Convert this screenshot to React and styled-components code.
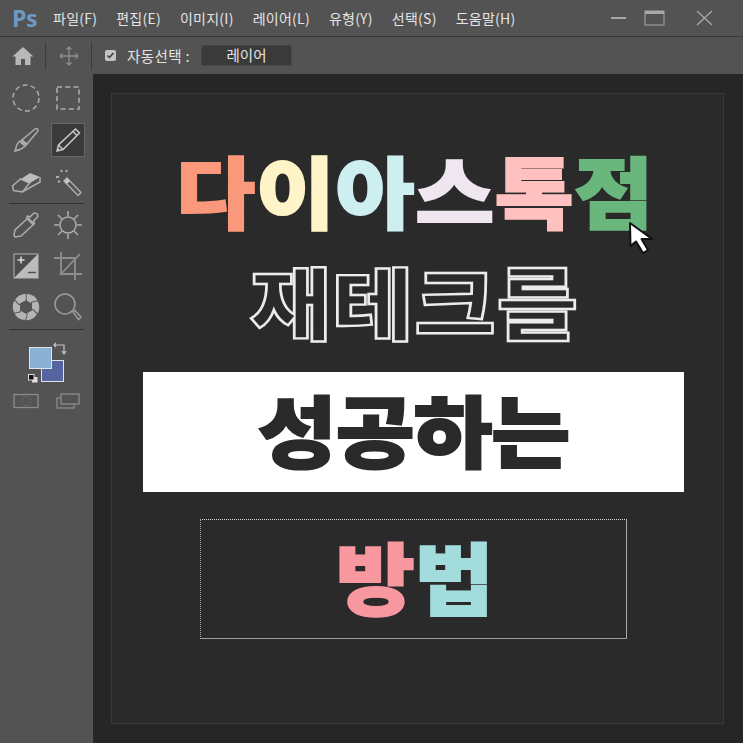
import React from 'react';
import styled, { createGlobalStyle, css } from 'styled-components';

const GlobalStyle = createGlobalStyle`
  html, body {
    margin: 0;
    padding: 0;
    background: #262626;
  }
`;

const KR = `"Noto Sans CJK KR", "Noto Sans", sans-serif`;

const Window = styled.div`
  width: 743px;
  height: 743px;
  display: flex;
  flex-direction: column;
  overflow: hidden;
  background: #535353;
  font-family: ${KR};
`;

const TitleBar = styled.header`
  height: 36px;
  display: flex;
  align-items: center;
  padding-left: 12px;
  border-bottom: 1px solid #373737;
  flex: none;
`;

const Logo = styled.div`
  width: 41px;
  font: bold 23px "Open Sans", sans-serif;
  letter-spacing: -0.5px;
  color: #6e9ac6;
`;

const Menu = styled.nav`
  display: flex;
  gap: 19px;
  flex: 1;
`;

const MenuItem = styled.span`
  font-size: 14px;
  line-height: 18px;
  color: #e4e4e4;
  letter-spacing: 0.25px;
`;

const WinControls = styled.div`
  display: flex;
  align-items: center;
  padding-right: 29px;
`;

const MinimizeIcon = styled.svg`
  margin-right: 17px;
`;

const CloseIcon = styled.svg`
  margin-left: 30px;
`;

const OptionsBar = styled.div`
  height: 37px;
  display: flex;
  align-items: center;
  flex: none;
`;

const OptionIcon = styled.div`
  width: 46px;
  height: 28px;
  display: flex;
  align-items: center;
  justify-content: center;
  border-right: 1px solid #3c3c3c;
  box-sizing: border-box;
`;

const CheckBox = styled.div`
  width: 11px;
  height: 11px;
  margin-left: 13px;
  background: #c4c4c4;
  border-radius: 2px;
  display: flex;
  align-items: center;
  justify-content: center;
`;

const OptionLabel = styled.span`
  margin-left: 11px;
  font-size: 14.5px;
  letter-spacing: 0.4px;
  color: #e4e4e4;
  width: 74px;
  white-space: nowrap;
`;

const LayerField = styled.div`
  width: 91px;
  height: 21px;
  box-sizing: border-box;
  background: #3a3a3a;
  border: 1px solid #474747;
  border-radius: 2px;
  color: #e4e4e4;
  font-size: 14.5px;
  line-height: 18px;
  text-align: center;
`;

const Body = styled.div`
  flex: 1;
  display: flex;
  min-height: 0;
`;

const Sidebar = styled.aside`
  width: 93px;
  flex: none;
  box-sizing: border-box;
  padding: 3px 5px 0;
  display: flex;
  flex-direction: column;
`;

const ToolGrid = styled.div`
  display: grid;
  grid-template-columns: 42px 42px;
  grid-auto-rows: ${p => p.$row}px;
`;

const Tool = styled.div`
  display: flex;
  align-items: center;
  justify-content: center;
`;

const ToolBox = styled.div`
  width: 34px;
  height: 34px;
  display: flex;
  align-items: center;
  justify-content: center;
  box-sizing: border-box;
  background: ${p => (p.$active ? '#3a3a3a' : 'transparent')};
  border: 1px solid ${p => (p.$active ? '#666' : 'transparent')};
`;

const Divider = styled.div`
  height: 1px;
  margin: ${p => p.$top || 0}px 4px 0;
  background: #333;
`;

const Swatches = styled.div`
  position: relative;
  height: 36px;
  margin-top: 16px;
`;

const Swatch = styled.div`
  position: absolute;
  left: ${p => p.$x}px;
  top: ${p => p.$y}px;
  width: 23px;
  height: 22px;
  box-sizing: border-box;
  border: 1px solid #dfe3ea;
  background: ${p => p.$color};
`;

const SwatchIcon = styled.svg`
  position: absolute;
  left: ${p => p.$x}px;
  top: ${p => p.$y}px;
`;

const BottomTools = styled.div`
  display: grid;
  grid-template-columns: 42px 42px;
  margin-top: 11px;
`;

const Workspace = styled.main`
  flex: 1;
  background: #262626;
  padding: 19px 19px 19px 18px;
  display: flex;
`;

const Document = styled.section`
  flex: 1;
  background: #2a2a2a;
  border: 1px solid #393939;
  box-sizing: border-box;
  padding-right: 9px;
  display: flex;
  flex-direction: column;
  align-items: center;
  position: relative;
`;

// the poster lettering is wider and heavier than the Black cut
const poster = css`
  font-size: 78px;
  font-weight: 900;
  white-space: nowrap;
  display: inline-block;
  transform: scaleX(1.1);
  -webkit-text-stroke: 2px currentColor;
`;

const Headline = styled.h1`
  margin: 50px 0 0 5px;
  height: 90px;
  line-height: 90px;
  letter-spacing: 0.6px;
  ${poster}
`;

const Letter = styled.span`
  color: ${p => p.$color};
`;

const Outlined = styled.h2`
  margin: 21px 0 0 3px;
  height: 90px;
  line-height: 90px;
  font-size: 78px;
  font-weight: 900;
  white-space: nowrap;
  letter-spacing: 1px;
  color: #2a2a2a;
  transform: scaleX(1.13);
  -webkit-text-stroke: 2.4px #ececec;
`;

const Banner = styled.div`
  margin-top: 27px;
  width: 541px;
  height: 120px;
  box-sizing: border-box;
  padding: 0 0 9px 2px;
  background: #fff;
  color: #2a2a2a;
  display: flex;
  align-items: center;
  justify-content: center;
`;

const BannerText = styled.span`
  letter-spacing: -1px;
  ${poster}
`;

const Marquee = styled.div`
  margin-top: 27px;
  width: 427px;
  height: 120px;
  box-sizing: border-box;
  padding: 0 0 8px 3px;
  border-style: dotted solid solid dotted;
  border-width: 1px;
  border-color: #e0e0e0 #a8a8a8 #9c9c9c #a8a8a8;
  display: flex;
  align-items: center;
  justify-content: center;
`;

const MarqueeText = styled.span`
  letter-spacing: 0;
  ${poster}
`;

const Cursor = styled.svg`
  position: absolute;
  left: 516px;
  top: 127px;
`;

const HEAD = [
  ['다', '#f9987a'],
  ['이', '#fff3c8'],
  ['아', '#cdeff0'],
  ['스', '#efe6ef'],
  ['톡', '#ffc0c0'],
  ['점', '#6ab77e'],
];

const MENUS = ['파일(F)', '편집(E)', '이미지(I)', '레이어(L)', '유형(Y)', '선택(S)', '도움말(H)'];

const stroke = { fill: 'none', stroke: '#adadad', strokeWidth: 1.5 };

const Icon = ({ children, size = 30 }) => (
  <svg width={size} height={size} viewBox="0 0 30 30">
    {children}
  </svg>
);

const TOOLS_TOP = [
  <Icon key="ellipse"><circle cx="15" cy="15" r="13" {...stroke} strokeDasharray="5 3.2" /></Icon>,
  <Icon key="rect"><rect x="4" y="4" width="22" height="22" {...stroke} strokeWidth="1.6" strokeDasharray="5 3.2" /></Icon>,
  <Icon key="brush">
    <path d="M24 4c2-1.500 4 .5 2.500 2.500L16 19l-5-4z" {...stroke} />
    <path d="M10.500 15.500l5 4c-2 3-5 5-11.500 6.500 1-2 1-4 2-6.500 1-2 2.500-3.500 4.500-4z" {...stroke} />
    <path d="M11 16l4 3-2 2-4-3z" fill="#adadad" />
  </Icon>,
  <Icon key="pencil">
    <path d="M22.500 4l4 4L10 24.500 4 26l1.500-6z" {...stroke} stroke="#c8c8c8" />
    <path d="M20 6.500l4 4M5.500 20l4.500 4.500" {...stroke} stroke="#c8c8c8" />
    <path d="M4 26l.8-3 2.200 2.200z" fill="#c8c8c8" />
  </Icon>,
  <Icon key="eraser">
    <path d="M1.500 19l8-7 9 4-7 9-9-1.500z" {...stroke} />
    <path d="M10 12l9-6 10 4-10 6z" fill="#bcbcbc" />
    <path d="M29 10v5l-18 10" {...stroke} />
  </Icon>,
  <Icon key="wand">
    <path d="M11 14l3-3 14 14.500-3 3z" {...stroke} />
    <path d="M11 14l3-3 3 3-3 3z" fill="#c4c4c4" />
    <path d="M8 3l1 2M14 3l-1 2M3 10h3M5 15l2-1" {...stroke} strokeWidth="2" />
  </Icon>,
];

const TOOLS_MID = [
  <Icon key="eyedropper">
    <path d="M17 8l6 6-13 12-6 1-1-2 1-5z" {...stroke} />
    <path d="M19 7l3-3c1-1.500 4-1 4.500.5.500 1.500 0 3-1 3.500l-3 3 1 2-2 1-6-6 1-2z" {...stroke} />
  </Icon>,
  <Icon key="dodge">
    <circle cx="15" cy="15" r="8" {...stroke} />
    <path d="M15 1v5M15 24v5M1 15h5M24 15h5M5 5l4 4M21 21l4 4M25 5l-4 4M9 21l-4 4" {...stroke} />
  </Icon>,
  <Icon key="levels">
    <path d="M3 3h24L3 27z" fill="#4d4d4d" />
    <path d="M27 3v24H3z" fill="#bcbcbc" />
    <rect x="3" y="3" width="24" height="24" fill="none" stroke="#b4b4b4" />
    <path d="M6.500 9h7M10 5.500v7" stroke="#d8d8d8" strokeWidth="1.500" />
    <path d="M17 21.500h8" stroke="#505050" strokeWidth="1.500" />
  </Icon>,
  <Icon key="crop">
    <path d="M8 1v22h21M1 7h21v22M7 24L27 3" {...stroke} stroke="#8e8e8e" strokeWidth="1.800" />
  </Icon>,
  <Icon key="aperture">
    {[0, 60, 120, 180, 240, 300].map(a => (
      <path
        key={a}
        d="M15.500 1.500A13.500 13.500 0 0 1 27 8.300L20.800 12L13.600 7.800z"
        fill="#b4b4b4"
        stroke="#535353"
        strokeWidth="0.900"
        transform={`rotate(${a} 15 15)`}
      />
    ))}
  </Icon>,
  <Icon key="zoom">
    <circle cx="12" cy="12" r="10" {...stroke} stroke="#9c9c9c" />
    <path d="M20 20l2-1.500 6 6.500-2.500 2.500z" {...stroke} stroke="#9c9c9c" />
  </Icon>,
];

export default function App() {
  return (
    <Window>
      <GlobalStyle />
      <TitleBar>
        <Logo>Ps</Logo>
        <Menu>
          {MENUS.map(m => (
            <MenuItem key={m}>{m}</MenuItem>
          ))}
        </Menu>
        <WinControls>
          <MinimizeIcon width="16" height="16"><rect y="7" width="15" height="2" fill="#a8a8a8" /></MinimizeIcon>
          <svg width="22" height="16"><rect x="1" y="1" width="19" height="14" fill="none" stroke="#a8a8a8" /><rect x="1" y="1" width="19" height="3" fill="#a8a8a8" /></svg>
          <CloseIcon width="18" height="16"><path d="M1 1l15 14M16 1L1 15" stroke="#a8a8a8" strokeWidth="1.300" /></CloseIcon>
        </WinControls>
      </TitleBar>
      <OptionsBar>
        <OptionIcon>
          <svg width="22" height="20" viewBox="0 0 22 20"><path d="M11 1L0.500 10.500H3.500V19H9V13H13V19H18.500V10.500H21.500z" fill="#b8b8b8" /></svg>
        </OptionIcon>
        <OptionIcon>
          <svg width="20" height="20" viewBox="0 0 20 20"><path d="M10 1v18M1 10h18M7.500 3.500L10 1l2.500 2.500M7.500 16.500L10 19l2.500-2.500M3.500 7.500L1 10l2.500 2.500M16.500 7.500L19 10l-2.500 2.500" fill="none" stroke="#8c8c8c" strokeWidth="1.300" /></svg>
        </OptionIcon>
        <CheckBox>
          <svg width="9" height="9" viewBox="0 0 9 9"><path d="M1.500 4.500l2 2 4-4.500" fill="none" stroke="#3a3a3a" strokeWidth="1.500" /></svg>
        </CheckBox>
        <OptionLabel>자동선택 :</OptionLabel>
        <LayerField>레이어</LayerField>
      </OptionsBar>
      <Body>
        <Sidebar>
          <ToolGrid $row={42}>
            {TOOLS_TOP.map((t, i) => (
              <Tool key={i}>
                <ToolBox $active={i === 3}>{t}</ToolBox>
              </Tool>
            ))}
          </ToolGrid>
          <Divider />
          <ToolGrid $row={41}>
            {TOOLS_MID.map((t, i) => (
              <Tool key={i}>{t}</Tool>
            ))}
          </ToolGrid>
          <Divider $top={2} />
          <Swatches>
            <Swatch $x={36} $y={14} $color="#56659f" />
            <Swatch $x={24} $y={1} $color="#8ab0d3" />
            <SwatchIcon $x={48} $y={-4} width="14" height="14" viewBox="0 0 14 14">
              <path d="M1 3h10v8M3 1L1 3l2 2M9 9l2 3 2-3" fill="none" stroke="#c4c4c4" strokeWidth="1.200" />
            </SwatchIcon>
            <SwatchIcon $x={23} $y={28} width="10" height="9" viewBox="0 0 10 9">
              <rect x="4" y="3" width="5.500" height="5.500" fill="#ddd" />
              <rect x="0.500" y="0.500" width="5.500" height="5.500" fill="#111" stroke="#ddd" />
            </SwatchIcon>
          </Swatches>
          <BottomTools>
            <Tool>
              <svg width="26" height="16" viewBox="0 0 26 16">
                <rect x="1" y="1.500" width="24" height="13" fill="none" stroke="#8c8c8c" strokeWidth="1.300" />
                <circle cx="13" cy="8" r="4.500" fill="none" stroke="#777" strokeDasharray="1.500 1" />
              </svg>
            </Tool>
            <Tool>
              <svg width="24" height="16" viewBox="0 0 24 16">
                <rect x="1" y="5" width="17" height="10" fill="none" stroke="#8c8c8c" strokeWidth="1.300" />
                <rect x="5" y="1" width="18" height="10" fill="#535353" stroke="#8c8c8c" strokeWidth="1.300" />
              </svg>
            </Tool>
          </BottomTools>
        </Sidebar>
        <Workspace>
          <Document>
            <Headline>
              {HEAD.map(([c, color]) => (
                <Letter key={c} $color={color}>{c}</Letter>
              ))}
            </Headline>
            <Cursor width="27" height="34" viewBox="0 0 27 34">
              <path d="M2 2L2.500 25 8 20.500 15 32 20 29 13.500 18 24 18z" fill="#fff" stroke="#111" strokeWidth="2" strokeLinejoin="round" />
            </Cursor>
            <Outlined>재테크를</Outlined>
            <Banner><BannerText>성공하는</BannerText></Banner>
            <Marquee>
              <MarqueeText>
                <Letter $color="#f7979f">방</Letter>
                <Letter $color="#a3dcdc">법</Letter>
              </MarqueeText>
            </Marquee>
          </Document>
        </Workspace>
      </Body>
    </Window>
  );
}
